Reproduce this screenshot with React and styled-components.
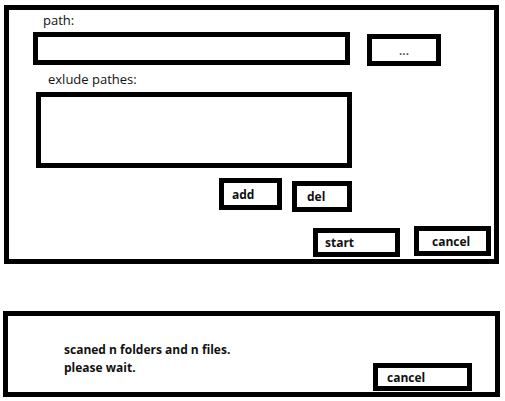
import styled, { createGlobalStyle } from "styled-components";

const GlobalStyle = createGlobalStyle`
  html, body {
    margin: 0;
    padding: 0;
    background: #ffffff;
  }
  body {
    font-family: "Open Sans", "Noto Sans", sans-serif;
    color: #111;
  }
`;

const App = () => {
  return (
    <Page>
      <GlobalStyle />
      <Panel $width={495} $height={259} $left={4} $top={5}>
        <Label $left={34} $top={2}>path:</Label>
        <Row $top={3}>
          <Field $left={24} $width={317} $height={33} />
          <Button $left={17} $top={2} $width={74} $height={32} $pad={0} $center $light>
            ...
          </Button>
        </Row>
        <Label $left={39} $top={5}>exlude pathes:</Label>
        <Field $left={27} $top={4} $width={316} $height={76} />
        <Row $top={10} $left={210} $gap={10}>
          <Button $width={63} $height={32} $pad={8}>add</Button>
          <Button $top={3} $width={60} $height={31} $pad={10}>del</Button>
        </Row>
        <Row $top={14} $end $gap={14}>
          <Button $top={2} $width={87} $height={29} $pad={7}>start</Button>
          <Button $width={77} $height={30} $pad={13} $right={3}>cancel</Button>
        </Row>
      </Panel>

      <Panel $width={497} $height={86} $left={3} $top={47} $row>
        <Status>
          scaned n folders and n files.
          <br />
          please wait.
        </Status>
        <Button $width={99} $height={28} $pad={9} $right={23} $bottom={1} $self="flex-end">
          cancel
        </Button>
      </Panel>
    </Page>
  );
};

export default App;

const Page = styled.div`
  display: flex;
  flex-direction: column;
  width: 505px;
  height: 401px;
`;

const Panel = styled.div`
  box-sizing: border-box;
  display: flex;
  flex-direction: ${(p) => (p.$row ? "row" : "column")};
  justify-content: ${(p) => (p.$row ? "space-between" : "flex-start")};
  align-items: flex-start;
  width: ${(p) => p.$width}px;
  height: ${(p) => p.$height}px;
  margin-left: ${(p) => p.$left}px;
  margin-top: ${(p) => p.$top}px;
  border: 5px solid #000;
  background: #fff;
`;

const Label = styled.div`
  margin-left: ${(p) => p.$left || 0}px;
  margin-top: ${(p) => p.$top || 0}px;
  font-size: 13px;
  line-height: 17px;
  color: #111;
`;

const Row = styled.div`
  display: flex;
  align-items: flex-start;
  align-self: stretch;
  justify-content: ${(p) => (p.$end ? "flex-end" : "flex-start")};
  gap: ${(p) => p.$gap || 0}px;
  margin-top: ${(p) => p.$top || 0}px;
  padding-left: ${(p) => p.$left || 0}px;
`;

const Field = styled.div`
  box-sizing: border-box;
  flex-shrink: 0;
  width: ${(p) => p.$width}px;
  height: ${(p) => p.$height}px;
  margin-left: ${(p) => p.$left || 0}px;
  margin-top: ${(p) => p.$top || 0}px;
  border: 5px solid #000;
  background: #fff;
`;

const Button = styled.div`
  box-sizing: border-box;
  flex-shrink: 0;
  display: flex;
  align-items: center;
  justify-content: ${(p) => (p.$center ? "center" : "flex-start")};
  width: ${(p) => p.$width}px;
  height: ${(p) => p.$height}px;
  margin-left: ${(p) => p.$left || 0}px;
  margin-top: ${(p) => p.$top || 0}px;
  margin-right: ${(p) => p.$right || 0}px;
  margin-bottom: ${(p) => p.$bottom || 0}px;
  align-self: ${(p) => p.$self || "auto"};
  padding-left: ${(p) => p.$pad}px;
  border: 5px solid #000;
  background: #fff;
  font-size: 12px;
  font-weight: ${(p) => (p.$light ? 600 : 700)};
  color: ${(p) => (p.$light ? "#444" : "#111")};
`;

const Status = styled.div`
  margin-left: 56px;
  margin-top: 25px;
  font-size: 12px;
  font-weight: 700;
  line-height: 18px;
  color: #111;
`;
